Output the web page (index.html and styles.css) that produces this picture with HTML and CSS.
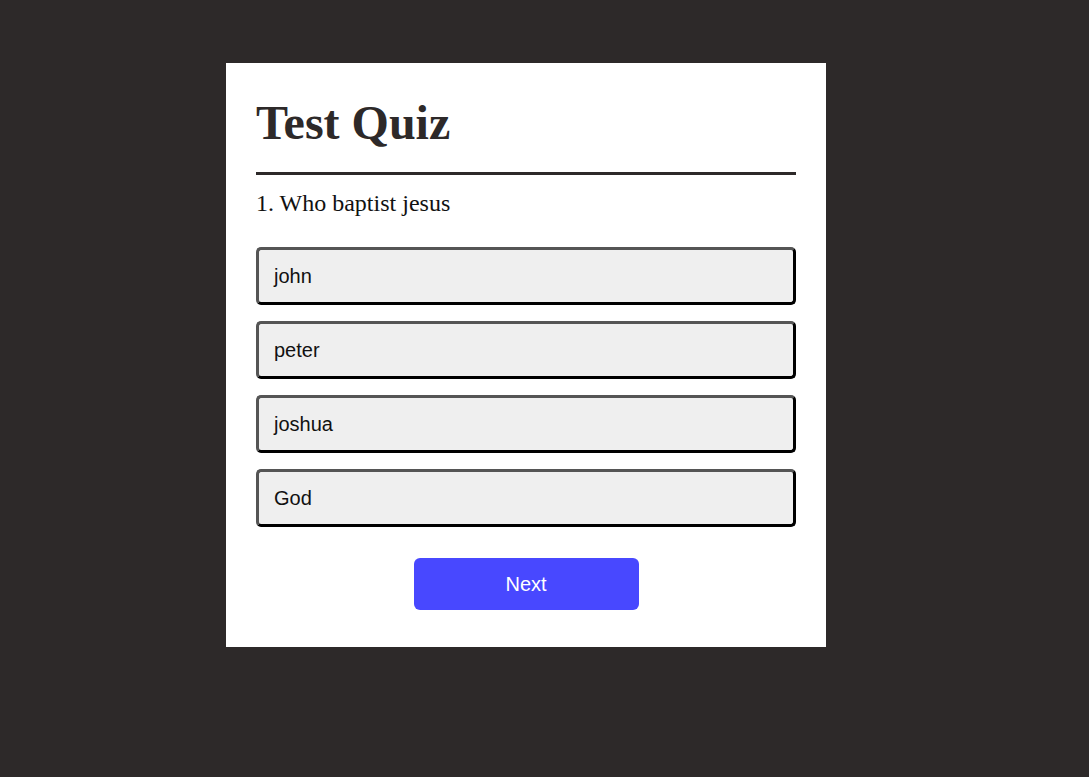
FILE: index.html
```html
<!DOCTYPE html>
<html lang="en">
<head>
<meta charset="utf-8">
<title>Test Quiz</title>
<link rel="stylesheet" href="styles.css">
</head>
<body>
<main class="quiz">
  <h1 class="quiz-title">Test Quiz</h1>
  <hr class="quiz-rule">
  <h2 class="question">1. Who baptist jesus</h2>
  <div class="answers">
    <button class="answer">john</button>
    <button class="answer">peter</button>
    <button class="answer">joshua</button>
    <button class="answer">God</button>
  </div>
  <div class="actions">
    <button class="next">Next</button>
  </div>
</main>
</body>
</html>
```
FILE: styles.css
```css
html, body {
  margin: 0;
  padding: 0;
}
body {
  background: #2d2929;
  min-height: 777px;
  font-family: "Liberation Serif", "Times New Roman", serif;
}
.quiz {
  box-sizing: border-box;
  width: 600px;
  margin: 63px 0 0 226px;
  padding: 30px 30px 37px;
  background: #fff;
}
.quiz-title {
  margin: 0;
  font-size: 48px;
  font-weight: bold;
  color: #2d2929;
  line-height: 1.15;
  padding-top: 2px;
}
.quiz-rule {
  border: 0;
  border-top: 3px solid #2d2929;
  margin: 22px 0 0;
}
.question {
  margin: 15px 0 0;
  font-size: 24px;
  font-weight: normal;
  color: #111;
  line-height: 1.15;
}
.answers {
  display: flex;
  flex-direction: column;
  gap: 16px;
  margin-top: 29px;
}
.answer {
  box-sizing: border-box;
  height: 58px;
  width: 100%;
  text-align: left;
  padding: 2px 15px 0;
  background: #efefef;
  border: 3px solid;
  border-color: #555 #000 #000 #555;
  border-radius: 5px;
  font-family: "Liberation Sans", Arial, sans-serif;
  font-size: 20px;
  color: #111;
}
.actions {
  display: flex;
  justify-content: center;
  margin-top: 31px;
}
.next {
  width: 225px;
  height: 52px;
  padding: 2px 0 0;
  border: 0;
  border-radius: 6px;
  background: #4848ff;
  color: #fff;
  font-family: "Liberation Sans", Arial, sans-serif;
  font-size: 20px;
}
```
